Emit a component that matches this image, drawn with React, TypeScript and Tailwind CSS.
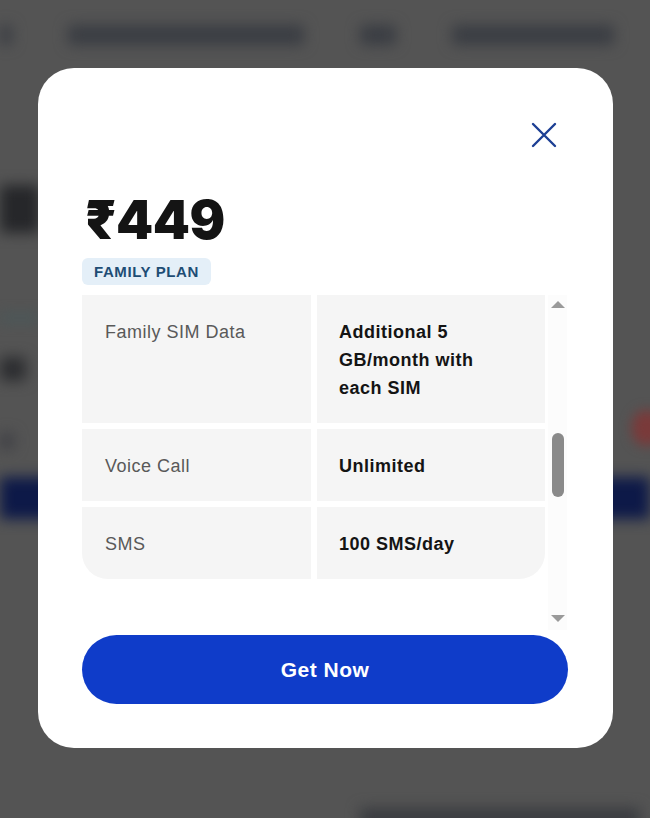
import React from "react";

const rows = [
  { label: "Family SIM Data", value: ["Additional 5", "GB/month with", "each SIM"] },
  { label: "Voice Call", value: ["Unlimited"] },
  { label: "SMS", value: ["100 SMS/day"] },
];

export default function App() {
  return (
    <div className="relative w-[650px] h-[818px] overflow-hidden bg-[#545454]" style={{ fontFamily: "'Liberation Sans', Arial, sans-serif" }}>
      {/* blurred background page */}
      <div className="absolute inset-0 blur-[7px]">
        <div className="flex items-center gap-[56px] pt-[25px]">
          <span className="w-[12px] h-[20px] bg-[#3a3d43] rounded"></span>
          <span className="w-[236px] h-[20px] bg-[#3a3d43] rounded"></span>
          <span className="w-[36px] h-[20px] bg-[#3a3d43] rounded"></span>
          <span className="w-[162px] h-[20px] bg-[#3a3d43] rounded"></span>
        </div>
        <div className="mt-[140px] w-[40px] h-[48px] bg-[#26272a] rounded"></div>
        <div className="mt-[82px] w-[40px] h-[6px] bg-[#455a5c]"></div>
        <div className="mt-[36px] w-[26px] h-[24px] bg-[#2c2d30] rounded"></div>
        <div className="mt-[52px] w-[14px] h-[16px] bg-[#3e3f44] rounded"></div>
        <div className="mt-[28px] w-[650px] h-[42px] bg-[#0d1948]"></div>
      </div>
      <div className="absolute left-[632px] top-[410px] w-[30px] h-[36px] rounded-full bg-[#7a3a3a] blur-[6px]"></div>
      <div className="absolute left-[360px] top-[808px] w-[280px] h-[20px] bg-[#3a3c40] blur-[7px]"></div>

      {/* modal */}
      <div className="absolute left-[38px] top-[68px] w-[575px] h-[680px] bg-white rounded-[36px] px-[44px] pt-[52px] flex flex-col">
        <div className="flex justify-end pr-[10px]">
          <svg width="30" height="30" viewBox="0 0 30 30" fill="none">
            <path d="M4 4 L26 26 M26 4 L4 26" stroke="#1c3f94" strokeWidth="2.4" strokeLinecap="round" />
          </svg>
        </div>
        <div className="mt-[42px] ml-[3px] text-[53px] leading-[56px] font-black tracking-[-0.5px] text-[#141414]" style={{ fontFamily: "Inter, 'Noto Sans', sans-serif" }}>₹449</div>
        <div className="mt-[10px]">
          <span className="inline-block bg-[#e4eff8] text-[#1e4d75] text-[15px] font-bold tracking-[0.6px] px-[12px] py-[4px] rounded-[6px] leading-[19px]">FAMILY PLAN</span>
        </div>
        <div className="mt-[10px] flex h-[335px]">
          <div className="w-[463px] flex flex-col gap-[6px]">
            {rows.map((r, i) => (
              <div key={r.label} className="flex gap-[6px]">
                <div className={`w-[229px] bg-[#f5f5f5] pl-[23px] pt-[23px] pb-[21px] text-[18px] tracking-[0.5px] leading-[28px] text-[#595959] ${i === rows.length - 1 ? "rounded-bl-[26px]" : ""}`}>
                  {r.label}
                </div>
                <div className={`w-[228px] bg-[#f5f5f5] pl-[22px] pt-[23px] pb-[21px] text-[18px] tracking-[0.5px] leading-[28px] font-bold text-[#141414] ${i === rows.length - 1 ? "rounded-br-[26px]" : ""}`}>
                  {r.value.map((v) => (
                    <div key={v}>{v}</div>
                  ))}
                </div>
              </div>
            ))}
          </div>
          <div className="ml-[3px] w-[19px] bg-[#fcfcfc] flex flex-col items-center">
            <svg width="16" height="10" viewBox="0 0 16 10" className="mt-[4px]">
              <path d="M1 9 L8 2 L15 9 Z" fill="#9a9a9a" />
            </svg>
            <div className="mt-[124px] w-[12px] h-[64px] rounded-[6px] bg-[#8a8a8a]"></div>
            <div className="flex-1"></div>
            <svg width="16" height="10" viewBox="0 0 16 10" className="mb-[6px]">
              <path d="M1 1 L8 8 L15 1 Z" fill="#9a9a9a" />
            </svg>
          </div>
        </div>
        <button className="mt-[5px] w-[486px] h-[69px] rounded-full bg-[#0f3cc9] text-white text-[21px] tracking-[0.5px] font-bold">Get Now</button>
      </div>
    </div>
  );
}
